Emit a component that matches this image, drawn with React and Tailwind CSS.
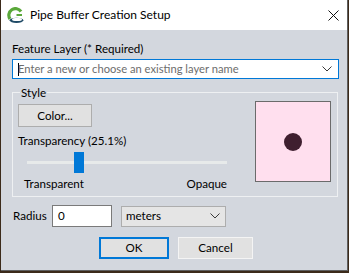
import React from "react";

function Chevron({ className }) {
  return (
    <svg width="10" height="6" viewBox="0 0 10 6" className={className}>
      <path d="M0.5 0.5 L5 5 L9.5 0.5" fill="none" stroke="#3a3a3a" strokeWidth="1" />
    </svg>
  );
}

function AppIcon() {
  return (
    <svg width="17" height="17" viewBox="0 0 17 17">
      <path d="M14 4.5 A6.5 6.5 0 1 0 3 12" fill="none" stroke="#5aa83a" strokeWidth="3.2" />
      <path d="M9.5 7 L15 7 L15 9 L9.5 9 Z" fill="#5aa83a" />
      <ellipse cx="9.5" cy="13.3" rx="6.8" ry="2.6" fill="#1f4a66" />
      <ellipse cx="10" cy="12.4" rx="5" ry="1.6" fill="#ffffff" />
    </svg>
  );
}

export default function App() {
  return (
    <div className="w-[349px] h-[273px] bg-[#3b2a1a] overflow-hidden font-['Lato',sans-serif] text-[11.6px] leading-[16px] text-[#000]">
      <div className="ml-[1px] w-[347px] h-[271px] flex flex-col border-r border-b border-[#5f5f5f] bg-[#d3d7de]">
        {/* Title bar */}
        <div className="h-[30px] bg-white flex items-center shrink-0">
          <div className="ml-[6px] mt-[1px]">
            <AppIcon />
          </div>
          <span className="ml-[6px] text-[12px] text-[#000]">Pipe Buffer Creation Setup</span>
          <div className="ml-auto mr-[8px] w-[11px] h-[11px] flex items-center justify-center">
            <svg width="11" height="11" viewBox="0 0 11 11">
              <path d="M0.5 0.5 L10.5 10.5 M10.5 0.5 L0.5 10.5" stroke="#111" strokeWidth="1" />
            </svg>
          </div>
        </div>

        {/* Body */}
        <div className="flex-1 pl-[11px] pr-[8px] pt-[11px] flex flex-col">
          <div className="h-[16px]">Feature Layer (* Required)</div>
          <div className="mt-[2px] h-[20px] w-[327px] bg-white border border-[#0078d7] flex items-center pl-[5px] pr-[6px]">
            <span className="w-[1px] h-[13px] bg-[#000]" />
            <span className="text-[#6d6d6d] -ml-[1px] text-[11.2px]">Enter a new or choose an existing layer name</span>
            <Chevron className="ml-auto" />
          </div>

          {/* Style group */}
          <div className="relative mt-[13px] w-[326px] h-[105px] border border-[#eef0f2] flex">
            <div className="absolute left-[7px] -top-[8px] px-[1px] bg-[#d3d7de] leading-[16px]">Style</div>
            <div className="flex flex-col pl-[5px] pt-[11px]">
              <div className="w-[74px] h-[23px] bg-[#e1e1e1] border border-[#adadad] flex items-center justify-center">
                Color...
              </div>
              <div className="mt-[6px] h-[16px]">Transparency (25.1%)</div>
              <div className="mt-[3px] ml-[9px] w-[200px] h-[21px] flex items-center">
                <div className="w-[47px] h-[3px] bg-[#e7eaea]" />
                <div className="w-[10px] h-[21px] bg-[#0078d7]" />
                <div className="w-[143px] h-[3px] bg-[#e7eaea]" />
              </div>
              <div className="mt-[3px] ml-[6px] w-[203px] flex justify-between">
                <span>Transparent</span>
                <span>Opaque</span>
              </div>
            </div>
            <div className="ml-auto mr-[6px] mt-[8px] w-[76px] h-[81px] bg-[#ffdfee] border border-[#6b6b6b] flex items-center justify-center">
              <div className="w-[18px] h-[18px] rounded-full bg-[#3f1f2f]" />
            </div>
          </div>

          {/* Radius row */}
          <div className="mt-[8px] flex items-center">
            <span className="ml-[1px] w-[39px]">Radius</span>
            <div className="w-[60px] h-[22px] bg-white border border-[#7a7a7a] pl-[5px] flex items-center">0</div>
            <div className="ml-[9px] w-[105px] h-[21px] bg-[#e5e5e5] border border-[#adadad] pl-[4px] pr-[5px] flex items-center">
              <span>meters</span>
              <Chevron className="ml-auto" />
            </div>
          </div>

          {/* Buttons */}
          <div className="mt-[10px] flex">
            <div className="ml-[87px] w-[70px] h-[22px] bg-[#e1e1e1] border-2 border-[#0078d7] flex items-center justify-center">OK</div>
            <div className="ml-[9px] w-[75px] h-[22px] bg-[#e1e1e1] border border-[#f4f4f4] flex items-center justify-center">Cancel</div>
          </div>
        </div>
      </div>
    </div>
  );
}
